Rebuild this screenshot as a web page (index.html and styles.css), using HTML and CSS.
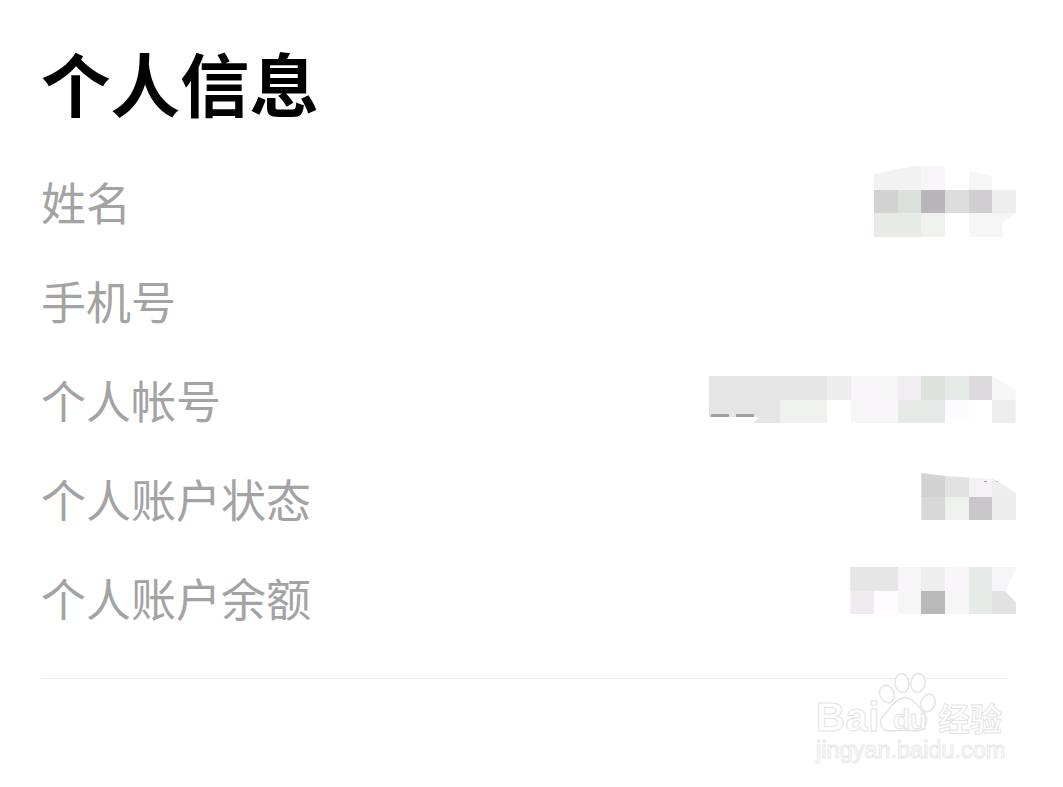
FILE: index.html
```html
<!DOCTYPE html>
<html lang="zh-CN">
<head>
<meta charset="utf-8">
<title>个人信息</title>
<link rel="stylesheet" href="styles.css">
</head>
<body>
<main class="page">
  <h1 class="title">个人信息</h1>
  <div class="rows">
    <div class="row">
      <span class="label">姓名</span>
      <div class="mosaic m-name">
        <i class="f3"></i><i class="f3"></i><i class="f8"></i><i class="ff"></i><i class="f7"></i><i class="ff"></i>
        <i class="d2"></i><i class="dc"></i><i class="b8"></i><i class="dd"></i><i class="d0"></i><i class="ee"></i>
        <i class="e8"></i><i class="e8"></i><i class="ef"></i><i class="ff"></i><i class="f7"></i><i class="f8"></i>
      </div>
    </div>
    <div class="row">
      <span class="label">手机号</span>
    </div>
    <div class="row">
      <span class="label">个人帐号</span>
      <div class="mosaic m-account">
        <i class="e5"></i><i class="e5"></i><i class="e5"></i><i class="e5"></i><i class="e5"></i><i class="ec"></i><i class="f8"></i><i class="f7"></i><i class="f1"></i><i class="dg"></i><i class="e8"></i><i class="da"></i><i class="f6"></i>
        <i class="e5"></i><i class="e5"></i><i class="e5"></i><i class="ef"></i><i class="ef"></i><i class="ff"></i><i class="f8"></i><i class="f8"></i><i class="e6"></i><i class="e6"></i><i class="fd"></i><i class="ff"></i><i class="ee"></i>
        <b class="dash dash-a"></b><b class="dash dash-b"></b>
      </div>
    </div>
    <div class="row">
      <span class="label">个人账户状态</span>
      <div class="mosaic m-status">
        <i class="d2"></i><i class="e2"></i><i class="f5"></i><i class="ee"></i>
        <i class="d8"></i><i class="ef"></i><i class="c8"></i><i class="ed"></i>
        <b class="speck speck-a"></b><b class="speck speck-b"></b>
      </div>
    </div>
    <div class="row">
      <span class="label">个人账户余额</span>
      <div class="mosaic m-balance">
        <i class="e6n"></i><i class="e6n"></i><i class="f8"></i><i class="ee"></i><i class="f9"></i><i class="e8"></i><i class="f8"></i>
        <i class="ea"></i><i class="fb"></i><i class="f7"></i><i class="b9"></i><i class="f7"></i><i class="e8"></i><i class="e2"></i>
      </div>
    </div>
  </div>
  <hr class="rule">
  <div class="mark">
    <svg class="paw" viewBox="0 0 70 64" aria-hidden="true">
      <ellipse cx="14" cy="22" rx="7" ry="9" transform="rotate(-25 14 22)"/>
      <ellipse cx="29" cy="11" rx="7" ry="9.500" transform="rotate(-8 29 11)"/>
      <ellipse cx="45" cy="11" rx="7" ry="9.500" transform="rotate(8 45 11)"/>
      <ellipse cx="55" cy="31" rx="7" ry="9" transform="rotate(20 55 31)"/>
      <path d="M30 26 C39 24 45 34 50 40 C57 47 53 60 42 59 C34 58 26 58 19 59 C8 60 4 50 11 43 C17 37 21 28 30 26 Z"/>
    </svg>
    <div class="mark-top">
      <span class="mark-bai">Bai</span>
      <span class="mark-du">du</span>
      <span class="mark-cn">经验</span>
    </div>
    <div class="mark-url">jingyan.baidu.com</div>
  </div>
</main>
</body>
</html>
```
FILE: styles.css
```css
html, body {
  margin: 0;
  padding: 0;
  background: #fff;
  overflow: hidden;
}
.page {
  position: relative;
  box-sizing: border-box;
  height: 787px;
  padding: 0 47px 0 41px;
  font-family: "Noto Sans CJK SC", "Liberation Sans", sans-serif;
}
.title {
  margin: 0;
  padding-top: 32px;
  height: 152px;
  box-sizing: border-box;
  font-size: 69.5px;
  line-height: 100px;
  font-weight: 700;
  color: #000;
}
.rows {
  display: flex;
  flex-direction: column;
}
.row {
  display: flex;
  justify-content: space-between;
  align-items: center;
  height: 99px;
  position: relative;
}
.label {
  font-size: 45px;
  line-height: 60px;
  color: #a3a3a3;
}
.mosaic {
  position: relative;
  display: grid;
  grid-auto-rows: 23.5px;
}
.mosaic i { display: block; }
.m-name {
  grid-template-columns: repeat(6, 23.7px);
  clip-path: polygon(0 8px, 27px 2px, 40px 0, 95px 0, 95px 5px, 120px 10px, 142px 22px, 142px 47px, 128px 57px, 129px 71px, 0 71px);
}
.m-account {
  grid-template-columns: repeat(13, 23.65px);
  clip-path: polygon(0 0, 284px 0, 307px 14px, 307px 47px, 45px 47px, 50px 41px, 0 41px);
}
.m-status {
  grid-template-columns: repeat(4, 23.7px);
  clip-path: polygon(0 0, 24px 3px, 72px 6px, 95px 20px, 95px 47px, 0 47px);
  margin-bottom: 4px;
}
.m-balance {
  grid-template-columns: repeat(7, 23.7px);
  clip-path: polygon(0 0, 166px 0, 166px 2px, 155px 24px, 166px 36px, 166px 47px, 0 47px);
  margin-bottom: 14px;
}
.dash {
  position: absolute;
  top: 38px;
  height: 3px;
  width: 18px;
  background: #a0a0a0;
}
.dash-a { left: 2px; }
.dash-b { left: 27px; }
.speck {
  position: absolute;
  top: 8px;
  height: 1px;
  width: 3px;
  background: #a0a0a0;
}
.speck-a { left: 63px; }
.speck-b { left: 75px; }

.f3 { background: #f3f2f3; }
.f8 { background: #f8f5f8; }
.ff { background: #fff; }
.f7 { background: #f7f6f7; }
.d2 { background: #d2d2d2; }
.dc { background: #dce0dc; }
.b8 { background: #b8b6b8; }
.dd { background: #dddddd; }
.d0 { background: #d0ced0; }
.ee { background: #eeeeee; }
.e8 { background: #e7ebe7; }
.ef { background: #eff1ef; }
.e5 { background: #e5e5e5; }
.ec { background: #ececec; }
.f1 { background: #f1eef1; }
.dg { background: #dde2dd; }
.da { background: #dcdadc; }
.f6 { background: #f6f6f6; }
.e6 { background: #e6eae6; }
.fd { background: #fdfbfd; }
.e2 { background: #e2e2e2; }
.f5 { background: #f5f2f5; }
.d8 { background: #d8d8d8; }
.c8 { background: #c8c6c8; }
.ed { background: #ededed; }
.e6n { background: #e6e6e6; }
.f9 { background: #f9f6f9; }
.ea { background: #efeaef; }
.fb { background: #fffbff; }
.b9 { background: #b9b9b9; }

.rule {
  margin: 31px 9px 0 0;
  border: 0;
  height: 1px;
  background: #e9e9e9;
}
.mark {
  position: absolute;
  left: 815px;
  top: 672px;
  width: 192px;
  height: 100px;
  font-family: "Liberation Sans", sans-serif;
  color: #fff;
}
.paw {
  position: absolute;
  left: 58px;
  top: 0;
  width: 70px;
  height: 64px;
  fill: #fff;
  stroke: #e4e4e4;
  stroke-width: 1.500;
}
.mark-top {
  position: absolute;
  left: 0;
  top: 22px;
  width: 192px;
  height: 44px;
}
.mark-bai, .mark-du, .mark-cn {
  position: absolute;
  -webkit-text-stroke: 1px #e4e4e4;
  color: #fff;
}
.mark-bai {
  left: 1px;
  top: 1px;
  font-size: 40px;
  line-height: 44px;
  font-weight: 700;
  letter-spacing: 0.5px;
}
.mark-du {
  left: 78px;
  top: 9px;
  font-size: 28px;
  line-height: 34px;
  font-weight: 700;
}
.mark-cn {
  left: 123px;
  top: 3px;
  font-family: "Noto Sans CJK SC", sans-serif;
  font-size: 32px;
  line-height: 40px;
  font-weight: 700;
}
.mark-url {
  position: absolute;
  left: 1px;
  top: 63px;
  font-size: 23.500px;
  line-height: 30px;
  -webkit-text-stroke: 1px #e8e8e8;
  color: #fff;
  white-space: nowrap;
}
```
